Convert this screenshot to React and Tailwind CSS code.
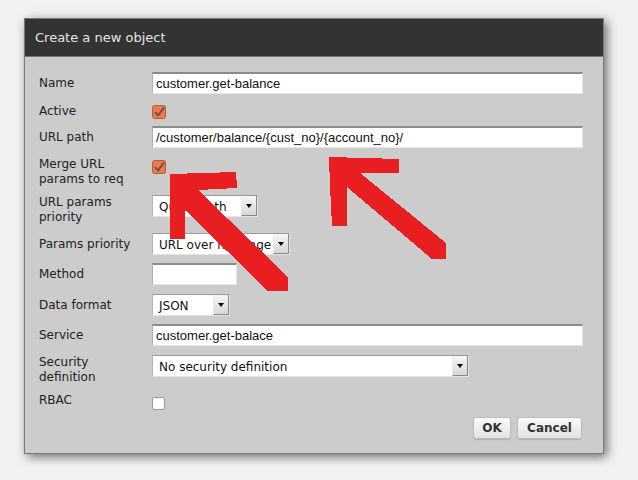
import React from "react";

const label = "w-[113px] shrink-0 text-[12px] leading-[15px] text-[#222] font-['DejaVu_Sans',sans-serif]";

function TextInput({ value, w }) {
  return (
    <div className={`${w} h-[22px] bg-white border-t-2 border-t-[#8c8c8c] border-l border-l-[#b0b0b0] border-r border-r-[#e6e6e6] border-b border-b-[#e6e6e6] flex items-center pl-[3px] text-[13px] text-[#111] font-['Liberation_Sans',Arial,sans-serif] whitespace-nowrap overflow-hidden`}>
      {value}
    </div>
  );
}

function Select({ value, w }) {
  return (
    <div className={`${w} h-[22px] bg-white border-t border-t-[#9a9a9a] border-l border-l-[#b5b5b5] border-r border-r-[#e4e4e4] border-b border-b-[#e4e4e4] flex items-stretch`}>
      <div className="flex-1 flex items-center pl-[6px] pt-[1px] text-[12px] text-[#111] font-['DejaVu_Sans',sans-serif] whitespace-nowrap overflow-hidden">
        {value}
      </div>
      <div className="w-[16px] shrink-0 bg-gradient-to-b from-[#f6f6f6] to-[#d8d8d8] border-l border-l-[#e8e8e8] border-r border-r-[#888] border-b border-b-[#888] flex items-center justify-center">
        <div className="w-0 h-0 border-l-[3px] border-r-[3px] border-t-[4px] border-l-transparent border-r-transparent border-t-black" />
      </div>
    </div>
  );
}

function Check({ checked }) {
  if (checked) {
    return (
      <svg width="14" height="14" viewBox="0 0 14 14" className="shrink-0">
        <rect x="0.5" y="0.5" width="13" height="13" rx="2" fill="#ea7b4f" stroke="#b9593a" />
        <path d="M3 7 L6 10.5 L12 2.5" fill="none" stroke="#5a4a44" strokeWidth="1.7" />
      </svg>
    );
  }
  return <div className="w-[13px] h-[13px] shrink-0 bg-white border border-[#9a9a9a] rounded-[2px]" />;
}

export default function App() {
  return (
    <div className="relative w-[638px] h-[480px] bg-[#f2f2f2] overflow-hidden pt-[18px] pl-[24px]">
      <div className="w-[580px] h-[436px] bg-[#cccccc] border border-[#7a7a7a] shadow-[3px_3px_10px_rgba(0,0,0,0.55)] flex flex-col">
        <div className="h-[38px] shrink-0 bg-[#333333] border-b border-b-[#777] flex items-center pl-[10px] text-[13px] text-[#e4e4e4] font-['DejaVu_Sans',sans-serif]">
          Create a new object
        </div>
        <div className="flex flex-col pl-[14px]">
          <div className="flex items-center mt-[15px]">
            <div className={label}>Name</div>
            <TextInput value="customer.get-balance" w="w-[431px]" />
          </div>
          <div className="flex items-center mt-[10px] h-[15px]">
            <div className={label}>Active</div>
            <Check checked />
          </div>
          <div className="flex items-center mt-[7px]">
            <div className={label}>URL path</div>
            <TextInput value="/customer/balance/{cust_no}/{account_no}/" w="w-[431px]" />
          </div>
          <div className="flex items-start mt-[9px]">
            <div className={label}>Merge URL<br />params to req</div>
            <div className="pt-[3px]"><Check checked /></div>
          </div>
          <div className="flex items-start mt-[8px]">
            <div className={label}>URL params<br />priority</div>
            <Select value="Query path" w="w-[106px]" />
          </div>
          <div className="flex items-center mt-[8px]">
            <div className={label}>Params priority</div>
            <Select value="URL over message" w="w-[138px]" />
          </div>
          <div className="flex items-center mt-[8px]">
            <div className={label}>Method</div>
            <TextInput value="" w="w-[85px]" />
          </div>
          <div className="flex items-center mt-[9px]">
            <div className={label}>Data format</div>
            <Select value="JSON" w="w-[78px]" />
          </div>
          <div className="flex items-center mt-[8px]">
            <div className={label}>Service</div>
            <TextInput value="customer.get-balace" w="w-[431px]" />
          </div>
          <div className="flex items-start mt-[9px]">
            <div className={label}>Security<br />definition</div>
            <Select value="No security definition" w="w-[317px]" />
          </div>
          <div className="flex items-start mt-[8px]">
            <div className={label}>RBAC</div>
            <div className="pt-[4px]"><Check /></div>
          </div>
          <div className="flex justify-end gap-[6px] mt-[7px] pr-[21px]">
            <button className="w-[38px] h-[22px] rounded-[3px] border border-[#bdbdbd] bg-gradient-to-b from-[#fafafa] to-[#e2e2e2] shadow-[0_1px_1px_rgba(0,0,0,0.15)] text-[12px] font-bold text-[#333] font-['DejaVu_Sans',sans-serif]">
              OK
            </button>
            <button className="w-[65px] h-[22px] rounded-[3px] border border-[#bdbdbd] bg-gradient-to-b from-[#fafafa] to-[#e2e2e2] shadow-[0_1px_1px_rgba(0,0,0,0.15)] text-[12px] font-bold text-[#333] font-['DejaVu_Sans',sans-serif]">
              Cancel
            </button>
          </div>
        </div>
      </div>
      <svg className="absolute left-0 top-0 pointer-events-none" width="638" height="480" viewBox="0 0 638 480" shapeRendering="crispEdges">
        <polygon fill="#e81e20" points="170,174 236,172 237,188 198,190 288,277 288,291 268,291 185,210 185,239 170,239" />
        <polygon fill="#e81e20" points="329,157 399,159 399,173 360,173 446,243 446,259 432,259 347,187 347,226 332,226 330,186" />
      </svg>
    </div>
  );
}
